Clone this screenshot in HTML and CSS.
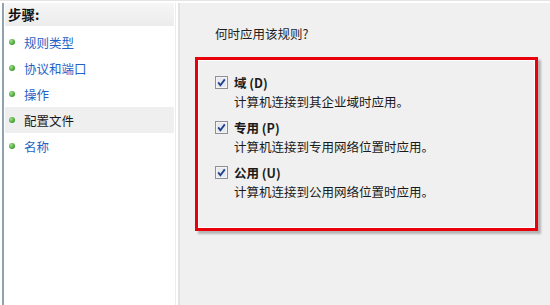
FILE: index.html
```html
<!DOCTYPE html>
<html>
<head>
<meta charset="utf-8">
<link rel="stylesheet" href="styles.css">
</head>
<body>
<div class="window">
  <div class="steps">
    <div class="steps-head">步骤:</div>
    <ul class="step-list">
      <li class="step"><span class="dot"></span><span class="link">规则类型</span></li>
      <li class="step"><span class="dot"></span><span class="link">协议和端口</span></li>
      <li class="step"><span class="dot"></span><span class="link">操作</span></li>
      <li class="step current"><span class="dot"></span><span>配置文件</span></li>
      <li class="step"><span class="dot"></span><span class="link">名称</span></li>
    </ul>
  </div>
  <div class="content">
    <div class="question">何时应用该规则?</div>
    <div class="box">
      <div class="opt">
        <div class="opt-row">
          <svg class="cb" width="13" height="13" viewBox="0 0 13 13"><rect x="0.5" y="0.5" width="12" height="12" fill="#f4f4f4" stroke="#8d9196"/><rect x="2" y="2" width="9" height="9" fill="#e6eaf0"/><path d="M3.2 6.4 L5.4 9.2 L9.8 3.4" fill="none" stroke="#21408a" stroke-width="1.8"/></svg>
          <span class="opt-label">域 (D)</span>
        </div>
        <div class="opt-desc">计算机连接到其企业域时应用。</div>
      </div>
      <div class="opt">
        <div class="opt-row">
          <svg class="cb" width="13" height="13" viewBox="0 0 13 13"><rect x="0.5" y="0.5" width="12" height="12" fill="#f4f4f4" stroke="#8d9196"/><rect x="2" y="2" width="9" height="9" fill="#e6eaf0"/><path d="M3.2 6.4 L5.4 9.2 L9.8 3.4" fill="none" stroke="#21408a" stroke-width="1.8"/></svg>
          <span class="opt-label">专用 (P)</span>
        </div>
        <div class="opt-desc">计算机连接到专用网络位置时应用。</div>
      </div>
      <div class="opt">
        <div class="opt-row">
          <svg class="cb" width="13" height="13" viewBox="0 0 13 13"><rect x="0.5" y="0.5" width="12" height="12" fill="#f4f4f4" stroke="#8d9196"/><rect x="2" y="2" width="9" height="9" fill="#e6eaf0"/><path d="M3.2 6.4 L5.4 9.2 L9.8 3.4" fill="none" stroke="#21408a" stroke-width="1.8"/></svg>
          <span class="opt-label">公用 (U)</span>
        </div>
        <div class="opt-desc">计算机连接到公用网络位置时应用。</div>
      </div>
    </div>
  </div>
</div>
</body>
</html>
```
FILE: styles.css
```css
html, body {
  margin: 0;
  padding: 0;
  background: #ffffff;
}
body {
  width: 550px;
  height: 305px;
  overflow: hidden;
  font-family: "Noto Sans CJK SC", "Liberation Sans", sans-serif;
  font-size: 12.5px;
  color: #1a1a1a;
}
.window {
  display: flex;
  height: 305px;
  padding-top: 2px;
  box-sizing: border-box;
  border-top: 1px solid #e4e4e4;
}
.steps {
  width: 174px;
  margin-left: 2px;
  border-left: 2px solid #8ea3ad;
  border-right: 1px solid #ececec;
  padding: 0 1px 0 1px;
  box-sizing: border-box;
  background: #ffffff;
}
.steps-head {
  height: 23px;
  line-height: 23px;
  padding-left: 3px;
  background: linear-gradient(#f6f6f6, #ececec);
  font-weight: bold;
  font-size: 13.5px;
  color: #111;
}
.step-list {
  list-style: none;
  margin: 3px 0 0 0;
  padding: 0;
}
.step {
  display: flex;
  align-items: center;
  height: 26px;
  padding-left: 4px;
}
.step.current {
  background: #efefef;
}
.dot {
  width: 6px;
  height: 6px;
  border-radius: 50%;
  background: radial-gradient(circle at 35% 35%, #9fe08a, #3f9d2e 70%);
  margin-right: 9px;
}
.link {
  color: #1f63c6;
}
.content {
  flex: 1;
  margin-left: 2px;
  border-left: 2px solid #e2e2e2;
  background: #f0f0f0;
  padding: 20px 0 0 15px;
}
.question {
  margin-left: 20px;
  height: 22px;
  line-height: 22px;
  color: #1e1e1e;
}
.box {
  margin-top: 12px;
  width: 320px;
  height: 155px;
  border: 3px solid #e8000b;
  box-shadow: inset 0 0 0 1px #ffffff, 3px 3px 2px rgba(0, 0, 0, 0.25);
  padding: 13px 0 0 17px;
  box-sizing: content-box;
}
.opt {
  margin-bottom: 7px;
}
.opt-row {
  display: flex;
  align-items: center;
  height: 19px;
}
.cb {
  margin-right: 6px;
  flex: none;
}
.opt-label {
  font-weight: bold;
}
.opt-desc {
  margin-left: 19px;
  height: 19px;
  line-height: 19px;
}
```
